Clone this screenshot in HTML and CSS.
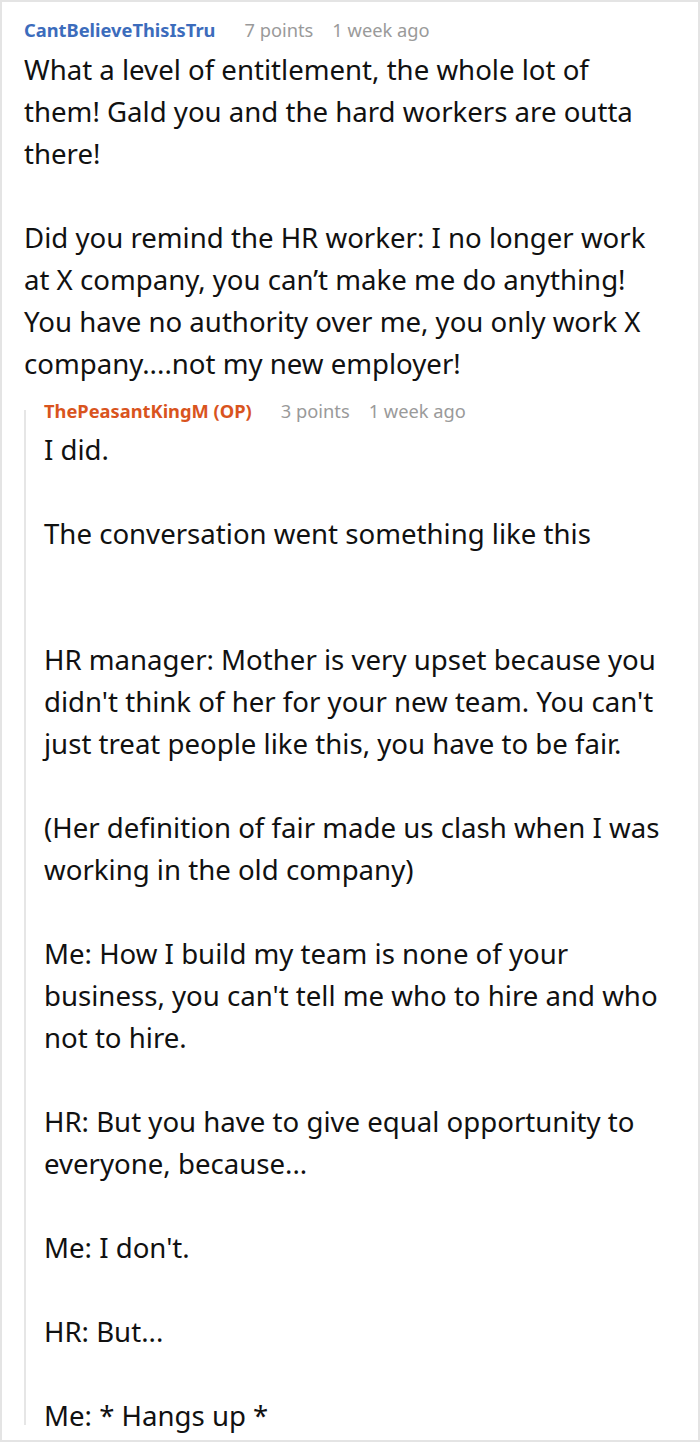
FILE: index.html
```html
<!DOCTYPE html>
<html>
<head>
<meta charset="utf-8">
<link rel="stylesheet" href="styles.css">
</head>
<body>
<div class="comment">
  <div class="meta">
    <span class="author">CantBelieveThisIsTru</span>
    <span class="points">7 points</span>
    <span class="time">1 week ago</span>
  </div>
  <div class="text">
    <p>What a level of entitlement, the whole lot of them! Gald you and the hard workers are outta there!</p>
    <p>Did you remind the HR worker: I no longer work at X company, you can’t make me do anything! You have no authority over me, you only work X company....not my new employer!</p>
  </div>
  <div class="reply">
    <div class="meta">
      <span class="author op">ThePeasantKingM (OP)</span>
      <span class="points">3 points</span>
      <span class="time">1 week ago</span>
    </div>
    <div class="text">
      <p>I did.</p>
      <p>The conversation went something like this</p>
      <p class="gap">HR manager: Mother is very upset because you didn't think of her for your new team. You can't just treat people like this, you have to be fair.</p>
      <p>(Her definition of fair made us clash when I was working in the old company)</p>
      <p>Me: How I build my team is none of your business, you can't tell me who to hire and who not to hire.</p>
      <p>HR: But you have to give equal opportunity to everyone, because...</p>
      <p>Me: I don't.</p>
      <p>HR: But...</p>
      <p>Me: * Hangs up *</p>
    </div>
  </div>
</div>
</body>
</html>
```
FILE: styles.css
```css
html, body {
  margin: 0;
  padding: 0;
  background: #ffffff;
}
body {
  font-family: "Noto Sans", "Open Sans", sans-serif;
  color: #111111;
}
.comment {
  box-sizing: border-box;
  width: 700px;
  height: 1442px;
  border: 2px solid #e4e4e4;
  padding: 18px 33px 0 22px;
  overflow: hidden;
}
.meta {
  display: flex;
  align-items: baseline;
  height: 20px;
  line-height: 20px;
  font-size: 18.3px;
  color: #9a9a9a;
  white-space: nowrap;
}
.author {
  font-weight: 700;
  color: #3c6cbc;
  margin-right: 29px;
}
.author.op {
  color: #d9541e;
}
.points {
  margin-right: 19px;
}
.text {
  margin-top: 8px;
  font-size: 27.6px;
  line-height: 42px;
}
.text p {
  margin: 0 0 42px 0;
}
.text p:last-child {
  margin-bottom: 0;
}
.text p.gap {
  margin-top: 84px;
}
.reply {
  position: relative;
  margin-top: 11px;
  padding: 6px 0 0 20px;
}
.reply::before {
  content: "";
  position: absolute;
  left: 0;
  top: 15px;
  bottom: 11px;
  width: 2px;
  background: #e6e6e6;
}
.reply .text {
  margin-top: 7px;
}
```
